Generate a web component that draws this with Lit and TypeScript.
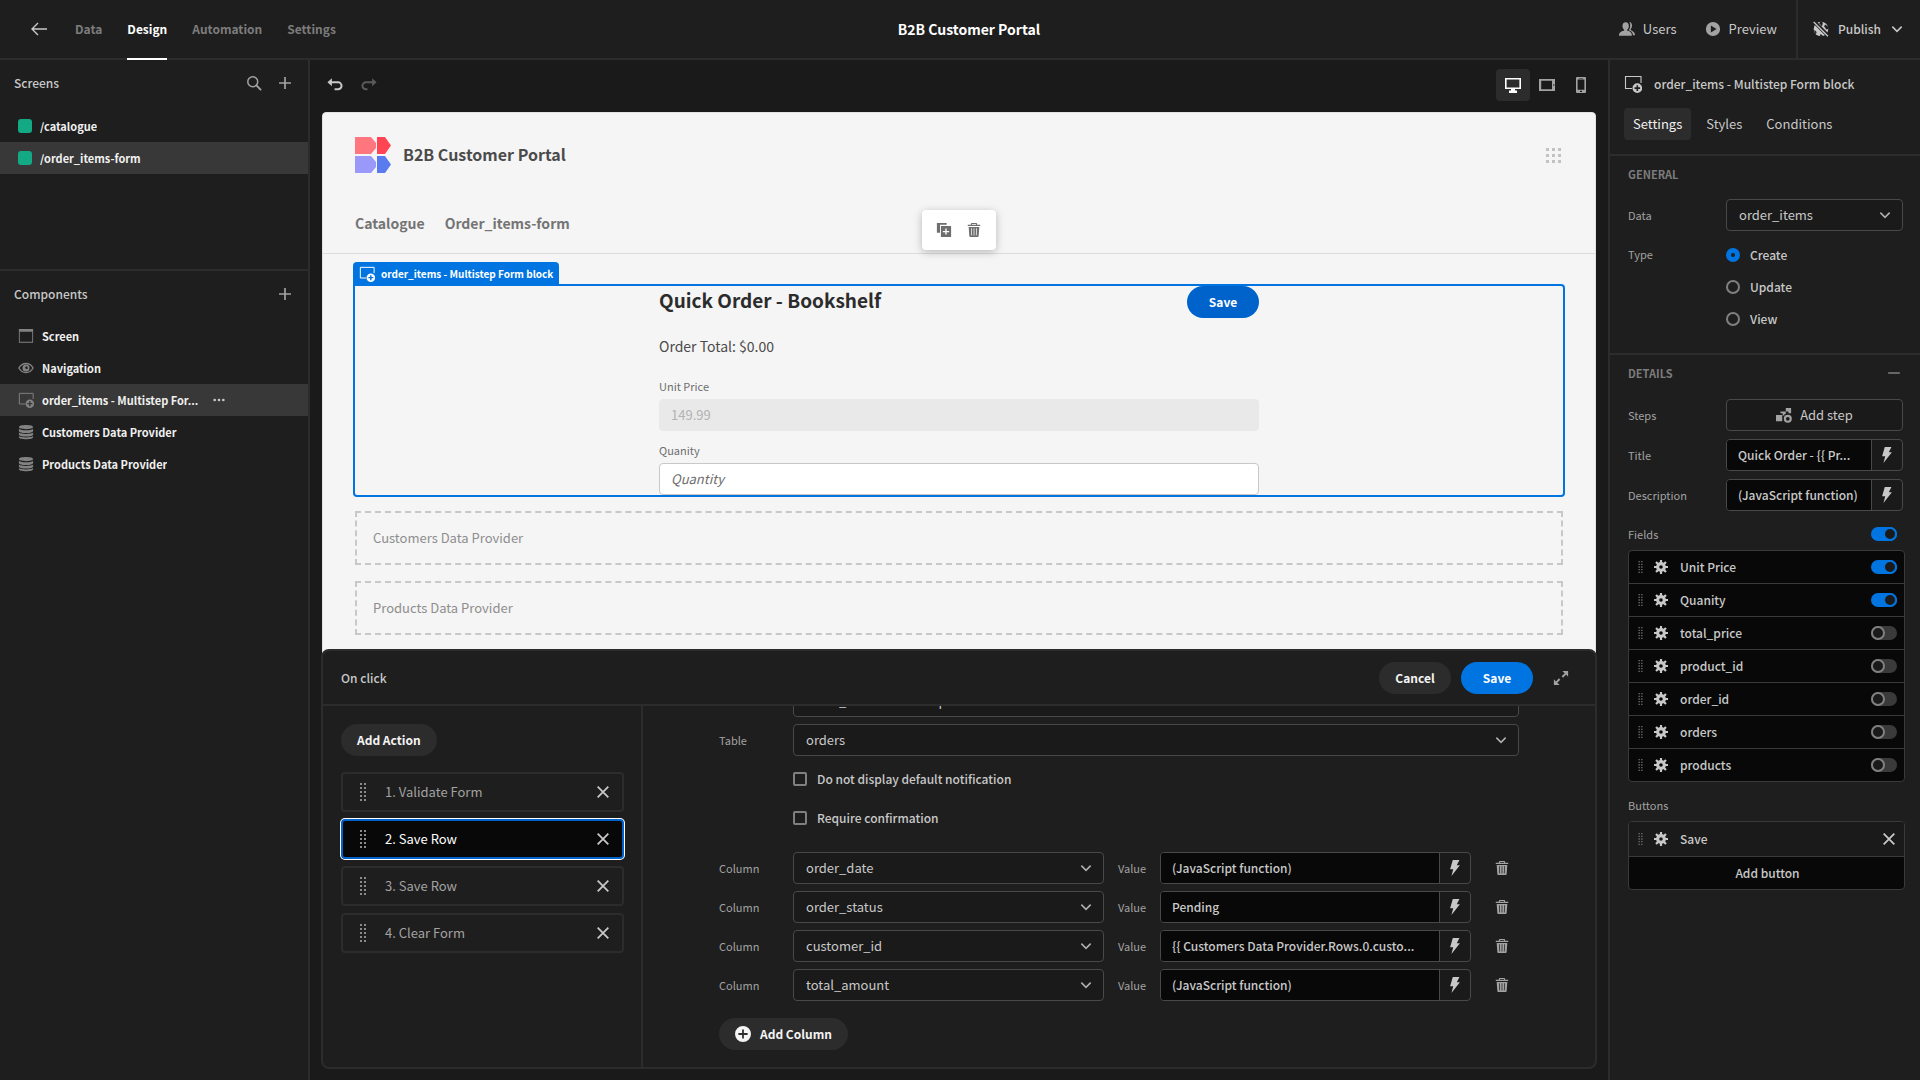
import { LitElement, html, css, svg, nothing, TemplateResult } from "lit";
import { customElement, state } from "lit/decorators.js";
import { classMap } from "lit/directives/class-map.js";

const ICONS = {
  back: svg`<path d="M17 9H2M8 3 2 9l6 6" fill="none" stroke="currentColor" stroke-width="1.4"/>`,
  search: svg`<circle cx="7.6" cy="7.6" r="5.6" fill="none" stroke="currentColor" stroke-width="1.7"/><path d="m11.7 11.7 4.700 4.700" stroke="currentColor" stroke-width="2.200" stroke-linecap="round"/>`,
  plus: svg`<path d="M9 2.300v13.400M2.300 9h13.400" stroke="currentColor" stroke-width="1.900"/>`,
  undo: svg`<path d="M5.500 1.500 0.500 6l5 4.500z" fill="currentColor"/><path d="M4 6h8.500a3.900 3.900 0 0 1 0 7.800H8.500" fill="none" stroke="currentColor" stroke-width="2.200"/>`,
  redo: svg`<path d="M12.500 1.500 17.500 6l-5 4.500z" fill="currentColor"/><path d="M14 6H5.500a3.900 3.900 0 0 0 0 7.800h1.800" fill="none" stroke="currentColor" stroke-width="2.200"/>`,
  desktop: svg`<path fill="currentColor" fill-rule="evenodd" d="M1 2h16v11h-6v1.500h2V17H5v-2.500h2V13H1zm1.600 1.600v7.800h12.800V3.600z"/>`,
  tablet: svg`<path fill="currentColor" fill-rule="evenodd" d="M1 3h16v12H1zm2.200 1.800v8.400h10.800V4.800zm12.100 3.400v1.600h1V8.200z"/>`,
  phone: svg`<path fill="currentColor" fill-rule="evenodd" d="M5 1h8q1 0 1 1v14q0 1-1 1H5q-1 0-1-1V2q0-1 1-1zm.6 2.500v10.200h6.800V3.500zM8 14.800V16h2v-1.200zM7 1.900v.7h4v-.7z"/>`,
  users: svg`<path fill="currentColor" d="M7.500 1.500c2.300 0 3.600 1.700 3.600 4 0 1.800-.9 3.300-1.700 4-.4.500-.2 1.300.5 1.600 2.500.8 4.600 1.800 4.600 5.400H0c0-3.600 2.600-4.600 5.100-5.400.7-.3.900-1.100.5-1.600-.8-.7-1.700-2.200-1.700-4 0-2.300 1.300-4 3.600-4z"/><path fill="currentColor" d="M11.600 1.200c2 .2 3.100 1.900 3.100 4 0 1.800-.7 3.100-1.500 3.900-.3.400-.2.900.3 1.200 2 .9 4.500 2.200 4.500 5.700h-2.300c-.2-3.400-2.200-4.700-4.600-5.500 1.500-2.500 2.500-6.500.5-9.300z"/>`,
  play: svg`<path fill="currentColor" fill-rule="evenodd" d="M9 1a8 8 0 1 1 0 16A8 8 0 0 1 9 1zM6.600 5v8L13 9z"/>`,
  globe: svg`<circle cx="9" cy="9" r="8.200" fill="currentColor"/><path d="M8 .8 7 3l2 1.500-.5 1.500 2-1 .5-2.500L10.500.8zM13.500 4l-1 2.500 1.500 1 .5 2 2.800-.5-.8-3zM1 10l2.500 1.500.5 2-1 1.500zM7.500 17.500l1-3 2 1.500 1 1.500z" fill="#1e1e1e"/><path d="M1 0.500 17.500 17" stroke="#1e1e1e" stroke-width="4.200"/><path d="M.8 1.200 16.800 17.200" stroke="currentColor" stroke-width="1.500"/>`,
  chevron: svg`<path d="m3 6 6 6 6-6" fill="none" stroke="currentColor" stroke-width="2"/>`,
  screen: svg`<path fill="currentColor" fill-rule="evenodd" d="M1 1h16v15.500H1zm1 3.200v11.300h14V4.200z"/>`,
  eye: svg`<path d="M1 9c3.800-6.800 12.200-6.800 16 0-3.800 6.800-12.200 6.800-16 0z" fill="none" stroke="currentColor" stroke-width="1.500"/><path fill="currentColor" fill-rule="evenodd" d="M9 5a4 4 0 1 1 0 8 4 4 0 0 1 0-8zm.5 2A1.600 1.600 0 1 0 11 9.500 2.500 2.500 0 0 0 9.500 7z"/>`,
  form: svg`<path d="M8 13.500H1.500v-12h15.500V8" fill="none" stroke="currentColor" stroke-width="1.100"/><path fill="currentColor" fill-rule="evenodd" d="M13.300 8.300a4.850 4.850 0 1 1 0 9.700 4.850 4.850 0 0 1 0-9.700zm-.8 2v2h-2v1.600h2v2h1.600v-2h2v-1.600h-2v-2z"/>`,
  data: svg`<path fill="currentColor" d="M1 3.400C1 1.900 4.600 1 9 1s8 .9 8 2.400S13.400 5.800 9 5.800 1 4.900 1 3.400zM1 5.300c1.500 1.200 4.600 1.700 8 1.700s6.500-.5 8-1.700v2.500c0 1.400-3.600 2.300-8 2.300s-8-.9-8-2.300zM1 9.600c1.500 1.100 4.600 1.600 8 1.600s6.500-.5 8-1.600v2.200c0 1.400-3.600 2.300-8 2.300s-8-.9-8-2.300zM1 13.500c1.500 1.100 4.600 1.600 8 1.600s6.500-.5 8-1.600v1.500c0 1.300-3.600 2.200-8 2.200S1 16.300 1 15z"/>`,
  more: svg`<circle cx="2.500" cy="9" r="2" fill="currentColor"/><circle cx="9" cy="9" r="2" fill="currentColor"/><circle cx="15.500" cy="9" r="2" fill="currentColor"/>`,
  duplicate: svg`<path fill="currentColor" d="M1 1h11v2H4.500v9H1z"/><path fill="currentColor" fill-rule="evenodd" d="M5.500 4.500H17V17H5.500zm5 2.800v2.700H7.700v1.500h2.800v2.700H12v-2.700h2.800V10H12V7.300z"/>`,
  trash: svg`<path fill="currentColor" fill-rule="evenodd" d="M6.500 1h5q1 0 1 1v1H16v1.500H2V3h3.500V2q0-1 1-1zm.2 1.200V3h4.600v-.8zM3 5.500h12l-.8 10.600q-.1.900-1 .9H4.800q-.9 0-1-.9zM5.700 7l.4 8.200h.8L6.500 7zm2.900 0v8.200h.8V7zm2.900 0-.4 8.200h.8l.4-8.200z"/>`,
  close: svg`<path d="m3 3 12 12M15 3 3 15" stroke="currentColor" stroke-width="2"/>`,
  expand: svg`<path fill="currentColor" d="M10.500 1H17v6.500l-2.300-2.300-3.400 3.400-1.500-1.500 3.400-3.400zM7.500 17H1v-6.500l2.300 2.300 3.400-3.400 1.500 1.500-3.400 3.400z"/>`,
  addCircle: svg`<path fill="currentColor" fill-rule="evenodd" d="M9 0a9 9 0 1 1 0 18A9 9 0 0 1 9 0zM8 3.800V8H3.800v2H8v4.200h2V10h4.200V8H10V3.800z"/>`,
  steps: svg`<path fill="currentColor" d="M0 9h7v7H0zM11 1h6v6h-3v-2h-3v3H9.500v1.500h-2V7H5V5h6z"/><circle cx="13.300" cy="13.300" r="3.300" fill="none" stroke="currentColor" stroke-width="2.400"/>`,
  bolt: svg`<path fill="currentColor" d="M6.500 0H14l-3 6h3.500L5 18l2-7.500H3.500z"/>`,
  gear: svg`<circle cx="9" cy="9" r="4.300" fill="none" stroke="currentColor" stroke-width="4"/><path d="M9 0v4M9 14v4M0 9h4M14 9h4M2.600 2.600 5 5M13 13l2.400 2.400M15.400 2.600 13 5M5 13l-2.400 2.400" stroke="currentColor" stroke-width="2.800"/>`,
  minus: svg`<path d="M1.500 9h15" stroke="currentColor" stroke-width="2"/>`,
};

type IconName = keyof typeof ICONS;

const icon = (name: IconName, size = "m") =>
  html`<svg class="icon icon-${size}" viewBox="0 0 18 18" aria-hidden="true">${ICONS[name]}</svg>`;

const grip = (size: string) => html`
  <svg class="grip grip-${size}" viewBox="0 0 3 9" aria-hidden="true">
    ${[0, 2, 4, 6, 8].map((y) => svg`<path fill="currentColor" d="M0 ${y}h1v1H0zM2 ${y}h1v1H2z"/>`)}
  </svg>`;

@customElement("app-root")
export class AppRoot extends LitElement {
  static styles = css`
    :host {
      --text: #e3e3e3;
      --soft: #c8c8c8;
      --muted: #a2a2a2;
      --dim: #7c7c7c;
      --panel: #1e1e1e;
      --base: #1a1a1a;
      --field: #080808;
      --line: #2c2c2c;
      --edge: #494949;
      --blue: #0075e2;
      display: block;
      font: 400 13px/18px "Noto Sans CJK KR", "Noto Sans", sans-serif;
      color: var(--soft);
      background: var(--base);
    }
    *, ::before, ::after { box-sizing: border-box; }
    h1, h2, h3, p, ul, ol { margin: 0; padding: 0; font-size: inherit; font-weight: inherit; list-style: none; }
    button, input, select { font: inherit; color: inherit; margin: 0; }
    button { background: none; border: 0; padding: 0; cursor: pointer; display: inline-flex; align-items: center; justify-content: center; }
    a { color: inherit; text-decoration: none; }

    .icon { display: block; flex: none; }
    .icon-xs { width: 12px; height: 12px; }
    .icon-s { width: 14px; height: 14px; }
    .icon-m { width: 16px; height: 16px; }
    .icon-l { width: 18px; height: 18px; }
    .grip { display: block; flex: none; color: #8a8a8a; }
    .grip-s { width: 5px; height: 12px; color: #6e6e6e; }
    .grip-m { width: 6px; height: 18px; }

    .app { display: flex; flex-direction: column; height: 100vh; overflow: hidden; }

    .top { flex: none; display: grid; grid-template-columns: 1fr auto 1fr; height: 60px; padding-left: 18px; background: var(--panel); border-bottom: 2px solid var(--line); }
    .top-left { display: flex; padding-left: 12px; }
    .back { width: 18px; margin-right: 27px; color: var(--soft); }
    .tabs { display: flex; gap: 25px; margin-bottom: -2px; font-size: 12px; font-weight: 700; color: var(--dim); }
    .tab { display: flex; align-items: center; padding-top: 2px; padding-bottom: 2px; border-bottom: 2px solid transparent; }
    .tab.on { color: #fff; border-color: #fff; }
    .app-name { align-self: center; font-size: 14px; font-weight: 700; color: #fff; }
    .top-right { display: flex; justify-content: flex-end; }
    .action { gap: 8px; margin-right: 28px; }
    .action:nth-child(2) { margin-right: 19px; }
    .action .icon { color: var(--muted); }
    .publish { gap: 9px; padding: 0 16px 0 15px; border-left: 2px solid var(--line); font-size: 12px; font-weight: 500; }

    .main { flex: 1; min-height: 0; display: grid; grid-template-columns: 310px minmax(0, 1fr) 312px; }

    .side { display: flex; flex-direction: column; background: var(--panel); border-right: 2px solid var(--line); }
    .screens { flex: none; height: 211px; border-bottom: 2px solid var(--line); }
    .side-head { display: flex; align-items: center; height: 49px; padding: 0 15px 3px 14px; gap: 15px; }
    .side-head h2 { flex: 1; font-size: 12px; font-weight: 500; }
    .side-head button { color: var(--muted); }
    .screens ul { padding-top: 1px; }
    .row { display: flex; align-items: center; height: 32px; padding: 0 18px; gap: 8px; font-size: 11px; font-weight: 700; color: #f0f0f0; }
    .row.on { background: #383838; }
    .row .icon { color: #828282; }
    .row a { white-space: nowrap; overflow: hidden; }
    .row button { margin-left: 7px; }
    .row button .icon { color: var(--soft); }
    .swatch { flex: none; width: 14px; height: 14px; border-radius: 3px; background: #12a984; }

    .stage { position: relative; display: flex; flex-direction: column; padding: 0 12px 16px; }
    .stage-bar { display: flex; align-items: center; justify-content: space-between; height: 52px; margin: 0 -2px 0 -4px; padding-bottom: 2px; }
    .stage-bar div { display: flex; }
    .tool { width: 34px; height: 32px; border-radius: 4px; color: var(--muted); }
    .tool.on { background: #2c2c2c; color: #fff; }
    .tool:disabled { color: #5a5a5a; }
    .tool.undo { color: var(--soft); }

    .canvas { flex: 1; min-height: 0; border: 1px solid #e2e2e2; border-radius: 4px; background: #f5f5f5; color: #4b4b4b; overflow: hidden; }
    .site-head { padding: 24px 32px 0; border-bottom: 1px solid #dcdcdc; }
    .brand { display: flex; align-items: center; gap: 12px; font-size: 16px; line-height: 24px; }
    .brand h2 { flex: 1; padding-bottom: 2px; font-weight: 700; }
    .logo { width: 36px; height: 36px; }
    .dots { width: 15px; height: 15px; margin-right: 2px; color: #c2c2c2; }
    .site-nav { display: flex; gap: 20px; padding: 38px 0 17px; font-size: 14px; line-height: 25px; font-weight: 700; color: #747474; }
    .site-body { padding: 32px 32px 0; display: grid; gap: 16px; }

    .block { position: relative; }
    .block::after { content: ""; position: absolute; inset: -2px; border: 2px solid var(--blue); border-radius: 0 4px 4px 4px; pointer-events: none; }
    .block-tag { position: absolute; left: -2px; bottom: 100%; display: flex; align-items: center; gap: 6px; height: 24px; padding: 0 6px; border-radius: 4px 4px 0 0; background: var(--blue); color: #fff; font-size: 10px; line-height: 16px; font-weight: 700; white-space: nowrap; }
    .block-tools { position: absolute; left: 50%; bottom: 100%; transform: translateX(-50%); display: flex; align-items: center; gap: 14px; height: 40px; margin-bottom: 36px; padding: 0 14px; border-radius: 4px; background: #fff; color: #6e6e6e; box-shadow: 0 2px 8px rgba(0, 0, 0, 0.25); }
    .form { width: 100%; max-width: 600px; margin: 0 auto; }
    .form-head { display: flex; align-items: center; justify-content: space-between; height: 32px; }
    .form-head h1 { padding-bottom: 4px; font-size: 19px; line-height: 28px; font-weight: 700; color: #2c2c2c; }
    .total { padding: 15px 0 19px; font-size: 14px; line-height: 26px; }
    .form label { display: block; padding-bottom: 5px; font-size: 11px; line-height: 16px; color: #6e6e6e; }
    .form input { display: block; width: 100%; height: 32px; padding: 0 11px 2px; border: 1px solid #c8c8c8; border-radius: 4px; background: #fff; }
    .form input::placeholder { color: #6e6e6e; font-style: italic; opacity: 1; }
    .form input:disabled { border-color: #e9e9e9; background: #e9e9e9; color: #b3b3b3; }
    .second { padding-top: 11px; }
    .empty { height: 54px; padding: 16px; border: 2px dashed #c8c8c8; color: #8e8e8e; }

    .pill { height: 32px; min-width: 72px; padding: 0 16px; border-radius: 16px; background: #2c2c2c; color: #f4f4f4; font-size: 12px; font-weight: 700; gap: 9px; }
    .pill.primary { background: var(--blue); color: #fff; }
    .pill.deep { background: #0063cc; color: #fff; }

    .drawer { position: absolute; left: 11px; right: 11px; bottom: 11px; height: 420px; display: flex; flex-direction: column; border: 2px solid var(--line); border-radius: 8px; background: var(--panel); overflow: hidden; }
    .drawer-head { flex: none; display: flex; align-items: center; gap: 10px; height: 55px; padding: 0 16px 0 18px; border-bottom: 2px solid var(--line); }
    .drawer-head h2 { flex: 1; font-size: 12px; font-weight: 500; }
    .expand { width: 36px; height: 32px; color: var(--muted); }
    .drawer-body { flex: 1; min-height: 0; display: grid; grid-template-columns: 320px minmax(0, 1fr); }
    .actions { padding: 18px 17px 18px 18px; border-right: 2px solid var(--line); }
    .actions ol { display: grid; gap: 7px; margin-top: 16px; }
    .step { display: flex; align-items: center; height: 40px; padding: 0 11px 0 17px; border: 2px solid var(--line); border-radius: 4px; color: var(--muted); }
    .step a { flex: 1; padding-left: 19px; }
    .step button { width: 16px; height: 16px; color: var(--soft); }
    .step.on { background: var(--field); border-color: #0063cc; box-shadow: 0 0 0 1px #fff; color: #fff; }
    .config { display: flex; flex-direction: column-reverse; overflow: auto; scrollbar-width: none; }
    .config-inner { width: 100%; max-width: 800px; margin: 0 auto; padding: 18px 0 17px; }

    .cfg { display: grid; grid-template-columns: 60px minmax(0, 1fr); gap: 7px 14px; align-items: center; }
    .cfg .check { grid-column: 2; height: 32px; }
    .cols { display: grid; gap: 7px; margin: 18px 0 17px; }
    .col { display: grid; grid-template-columns: 60px minmax(0, 1fr) 28px minmax(0, 1fr) 34px; gap: 14px; align-items: center; }
    .lbl { font-size: 11px; line-height: 16px; color: var(--muted); }
    .del { height: 32px; color: var(--muted); }

    .check { display: flex; align-items: center; gap: 10px; font-size: 12px; font-weight: 500; }
    .check input { appearance: none; flex: none; width: 14px; height: 14px; border: 2px solid #808080; border-radius: 2px; }
    .check .radio { border-radius: 50%; }
    .check .radio:checked { border: 5px solid var(--blue); }

    .select { display: grid; grid-template-columns: minmax(0, 1fr) auto; align-items: center; }
    .select select { grid-area: 1 / 1 / 2 / 3; appearance: none; width: 100%; height: 32px; padding: 0 32px 0 12px; border: 1px solid var(--edge); border-radius: 4px; background: var(--base); }
    .select .icon { grid-area: 1 / 2; margin-right: 11px; color: #b0b0b0; pointer-events: none; }

    .bind { display: flex; height: 32px; border: 1px solid var(--edge); border-radius: 4px; background: var(--base); overflow: hidden; }
    .bind input { flex: 1; min-width: 0; padding: 0 11px 1px; border: 0; background: var(--field); font-size: 12px; font-weight: 500; text-overflow: ellipsis; }
    .bind button { flex: none; width: 31px; border-left: 1px solid var(--edge); color: var(--soft); }

    .props { background: var(--panel); border-left: 2px solid var(--line); overflow: hidden; }
    .props-head { padding: 13px 14px 14px; border-bottom: 2px solid var(--line); }
    .props-title { display: flex; align-items: center; gap: 12px; height: 22px; font-size: 12px; font-weight: 500; }
    .props-tabs { display: flex; gap: 6px; margin-top: 13px; }
    .props-tab { height: 32px; padding: 0 9px; border-radius: 4px; }
    .props-tab.on { background: #2c2c2c; color: #f0f0f0; }
    .group { padding: 0 17px 0 18px; }
    .group + .group { border-top: 2px solid var(--line); }
    .group-head { display: flex; align-items: center; justify-content: space-between; height: 39px; padding: 0 2px 3px 0; font-size: 11px; font-weight: 700; color: var(--dim); }
    .props-list { display: grid; gap: 8px; padding-top: 4px; }
    .group + .group .props-list { padding-top: 5px; }
    .prop { display: grid; grid-template-columns: 90px minmax(0, 1fr); gap: 8px; align-items: center; }
    .prop.top-align { align-items: start; padding-bottom: 18px; }
    .prop.top-align > .lbl { padding: 7px 0; }
    .radios .check { height: 32px; }
    .outline { height: 32px; gap: 8px; border: 1px solid var(--edge); border-radius: 4px; background: var(--base); }
    .outline .icon { color: var(--muted); }
    .sub { display: flex; align-items: center; justify-content: space-between; height: 39px; padding: 6px 6px 0 0; }
    .items { margin-right: -2px; border: 1px solid #3a3a3a; border-radius: 4px; background: var(--field); overflow: hidden; font-size: 12px; font-weight: 500; }
    .item { display: flex; align-items: center; height: 33px; padding: 0 7px 0 9px; border-bottom: 1px solid #3a3a3a; }
    .item:last-child { height: 32px; border-bottom: 0; }
    .item .icon { margin: 0 12px 0 11px; }
    .item label { flex: 1; }
    .item button .icon { margin: 0; }
    .item.tall { height: 35px; background: var(--base); }
    .item .wide { flex: 1; height: 32px; }
    .toggle { appearance: none; flex: none; display: flex; width: 26px; height: 14px; border-radius: 7px; background: #3a3a3a; }
    .toggle::before { content: ""; width: 14px; height: 14px; border: 2px solid #808080; border-radius: 50%; background: var(--base); }
    .toggle:checked { background: var(--blue); justify-content: flex-end; }
    .toggle:checked::before { border-color: var(--blue); }
  `;

  @state() private activeStep = 1;

  private fields: [string, boolean][] = [
    ["Unit Price", true],
    ["Quanity", true],
    ["total_price", false],
    ["product_id", false],
    ["order_id", false],
    ["orders", false],
    ["products", false],
  ];
  private steps = ["Validate Form", "Save Row", "Save Row", "Clear Form"];
  private columns = [
    ["order_date", "(JavaScript function)"],
    ["order_status", "Pending"],
    ["customer_id", "{{ Customers Data Provider.Rows.0.custo..."],
    ["total_amount", "(JavaScript function)"],
  ];
  private tree: [IconName, string][] = [
    ["screen", "Screen"],
    ["eye", "Navigation"],
    ["form", "order_items - Multistep For..."],
    ["data", "Customers Data Provider"],
    ["data", "Products Data Provider"],
  ];

  private select(id: string, value: string) {
    return html`<div class="select"><select id=${id}><option>${value}</option></select>${icon("chevron", "s")}</div>`;
  }

  private bindable(id: string, value: string) {
    return html`<div class="bind"><input id=${id} type="text" .value=${value}><button aria-label="Bind value">${icon("bolt")}</button></div>`;
  }

  private prop(id: string, label: string, control: TemplateResult) {
    return html`<div class="prop"><label class="lbl" for=${id}>${label}</label>${control}</div>`;
  }

  private header() {
    return html`
      <header class="top">
        <div class="top-left">
          <button class="back" aria-label="Back">${icon("back", "l")}</button>
          <nav class="tabs">
            ${["Data", "Design", "Automation", "Settings"].map(
              (t) => html`<a href="#" class=${classMap({ tab: true, on: t === "Design" })}>${t}</a>`
            )}
          </nav>
        </div>
        <h1 class="app-name">B2B Customer Portal</h1>
        <div class="top-right">
          <button class="action">${icon("users")}Users</button>
          <button class="action">${icon("play")}Preview</button>
          <button class="publish">${icon("globe")}Publish${icon("chevron", "s")}</button>
        </div>
      </header>`;
  }

  private sidebar() {
    return html`
      <aside class="side">
        <section class="screens">
          <div class="side-head">
            <h2>Screens</h2>
            <button aria-label="Search">${icon("search")}</button>
            <button aria-label="Add screen">${icon("plus")}</button>
          </div>
          <ul>
            <li class="row"><span class="swatch"></span><a href="#">/catalogue</a></li>
            <li class="row on"><span class="swatch"></span><a href="#">/order_items-form</a></li>
          </ul>
        </section>
        <section>
          <div class="side-head">
            <h2>Components</h2>
            <button aria-label="Add component">${icon("plus")}</button>
          </div>
          <ul>
            ${this.tree.map(
              ([glyph, name]) => html`
                <li class=${classMap({ row: true, on: glyph === "form" })}>
                  ${icon(glyph)}<a href="#">${name}</a>
                  ${glyph === "form" ? html`<button aria-label="More">${icon("more", "xs")}</button>` : nothing}
                </li>`
            )}
          </ul>
        </section>
      </aside>`;
  }

  private canvas() {
    return html`
      <div class="stage-bar">
        <div>
          <button class="tool undo" aria-label="Undo">${icon("undo")}</button>
          <button class="tool" aria-label="Redo" disabled>${icon("redo")}</button>
        </div>
        <div>
          <button class="tool on" aria-label="Desktop">${icon("desktop", "l")}</button>
          <button class="tool" aria-label="Tablet">${icon("tablet", "l")}</button>
          <button class="tool" aria-label="Mobile">${icon("phone", "l")}</button>
        </div>
      </div>
      <div class="canvas">
        <header class="site-head">
          <div class="brand">
            <svg class="logo" viewBox="0 0 36 36" aria-hidden="true">
              <path fill="#ff767e" d="M0 0h16l5 6v5l-5 6H0z" /><path fill="#ff4553" d="M22 0h8l6 8.500-6 8.500h-8z" />
              <path fill="#9a98f8" d="M0 19h16l5 6v5l-5 6H0z" /><path fill="#5a7bee" d="M22 19h8l6 8.500-6 8.500h-8z" />
            </svg>
            <h2>B2B Customer Portal</h2>
            <svg class="dots" viewBox="0 0 15 15" aria-hidden="true">
              ${[0, 6, 12].map((y) => svg`<path fill="currentColor" d="M0 ${y}h3v3H0zM6 ${y}h3v3H6zM12 ${y}h3v3h-3z"/>`)}
            </svg>
          </div>
          <nav class="site-nav"><a href="#">Catalogue</a><a href="#">Order_items-form</a></nav>
        </header>
        <div class="site-body">
          <section class="block">
            <div class="block-tag">${icon("form")}order_items - Multistep Form block</div>
            <div class="block-tools">
              <button aria-label="Duplicate">${icon("duplicate")}</button>
              <button aria-label="Delete">${icon("trash")}</button>
            </div>
            <form class="form" @submit=${(e: Event) => e.preventDefault()}>
              <div class="form-head"><h1>Quick Order - Bookshelf</h1><button class="pill deep">Save</button></div>
              <p class="total">Order Total: $0.00</p>
              <label for="unit">Unit Price</label>
              <input id="unit" type="text" value="149.99" disabled>
              <div class="second">
                <label for="qty">Quanity</label>
                <input id="qty" type="text" placeholder="Quantity">
              </div>
            </form>
          </section>
          <div class="empty">Customers Data Provider</div>
          <div class="empty">Products Data Provider</div>
        </div>
      </div>`;
  }

  private drawer() {
    return html`
      <section class="drawer">
        <div class="drawer-head">
          <h2>On click</h2>
          <button class="pill">Cancel</button>
          <button class="pill primary">Save</button>
          <button class="expand" aria-label="Expand">${icon("expand")}</button>
        </div>
        <div class="drawer-body">
          <div class="actions">
            <button class="pill">Add Action</button>
            <ol>
              ${this.steps.map(
                (name, i) => html`
                  <li class=${classMap({ step: true, on: i === this.activeStep })}>
                    ${grip("m")}<a href="#" @click=${() => (this.activeStep = i)}>${i + 1}. ${name}</a>
                    <button aria-label="Remove">${icon("close")}</button>
                  </li>`
              )}
            </ol>
          </div>
          <div class="config">
            <div class="config-inner">
              <div class="cfg">
                <label class="lbl" for="source">Source</label>
                ${this.select("source", "order_items - Multistep Form block")}
                <label class="lbl" for="table">Table</label>
                ${this.select("table", "orders")}
                <label class="check"><input type="checkbox">Do not display default notification</label>
                <label class="check"><input type="checkbox">Require confirmation</label>
              </div>
              <div class="cols">
                ${this.columns.map(
                  ([col, value], i) => html`
                    <div class="col">
                      <label class="lbl" for="col${i}">Column</label>${this.select(`col${i}`, col)}
                      <label class="lbl" for="val${i}">Value</label>${this.bindable(`val${i}`, value)}
                      <button class="del" aria-label="Delete column">${icon("trash")}</button>
                    </div>`
                )}
              </div>
              <button class="pill">${icon("addCircle")}Add Column</button>
            </div>
          </div>
        </div>
      </section>`;
  }

  private properties() {
    return html`
      <aside class="props">
        <div class="props-head">
          <div class="props-title">${icon("form", "l")}<h2>order_items - Multistep Form block</h2></div>
          <div class="props-tabs">
            ${["Settings", "Styles", "Conditions"].map(
              (t) => html`<button class=${classMap({ "props-tab": true, on: t === "Settings" })}>${t}</button>`
            )}
          </div>
        </div>
        <section class="group">
          <div class="group-head"><h3>GENERAL</h3></div>
          <div class="props-list">
            ${this.prop("data", "Data", this.select("data", "order_items"))}
            <div class="prop top-align" role="radiogroup" aria-labelledby="type">
              <span class="lbl" id="type">Type</span>
              <div class="radios">
                ${["Create", "Update", "View"].map(
                  (t) => html`<label class="check"><input class="radio" type="radio" name="type" ?checked=${t === "Create"}>${t}</label>`
                )}
              </div>
            </div>
          </div>
        </section>
        <section class="group">
          <div class="group-head"><h3>DETAILS</h3><button aria-label="Collapse">${icon("minus", "s")}</button></div>
          <div class="props-list">
            ${this.prop("steps", "Steps", html`<button id="steps" class="outline">${icon("steps")}Add step</button>`)}
            ${this.prop("title", "Title", this.bindable("title", "Quick Order - {{ Pr..."))}
            ${this.prop("desc", "Description", this.bindable("desc", "(JavaScript function)"))}
          </div>
          <div class="sub">
            <label class="lbl" for="all">Fields</label>
            <input id="all" class="toggle" type="checkbox" checked>
          </div>
          <ul class="items">
            ${this.fields.map(
              ([name, on], i) => html`
                <li class="item">
                  ${grip("s")}${icon("gear", "s")}<label for="field${i}">${name}</label>
                  <input id="field${i}" class="toggle" type="checkbox" ?checked=${on}>
                </li>`
            )}
          </ul>
          <div class="sub"><span class="lbl">Buttons</span></div>
          <ul class="items">
            <li class="item tall">
              ${grip("s")}${icon("gear", "s")}<label for="remove">Save</label>
              <button id="remove" aria-label="Remove button">${icon("close")}</button>
            </li>
            <li class="item"><button class="wide">Add button</button></li>
          </ul>
        </section>
      </aside>`;
  }

  render() {
    return html`
      <div class="app">
        ${this.header()}
        <div class="main">
          ${this.sidebar()}
          <main class="stage">${this.canvas()}${this.drawer()}</main>
          ${this.properties()}
        </div>
      </div>`;
  }
}
